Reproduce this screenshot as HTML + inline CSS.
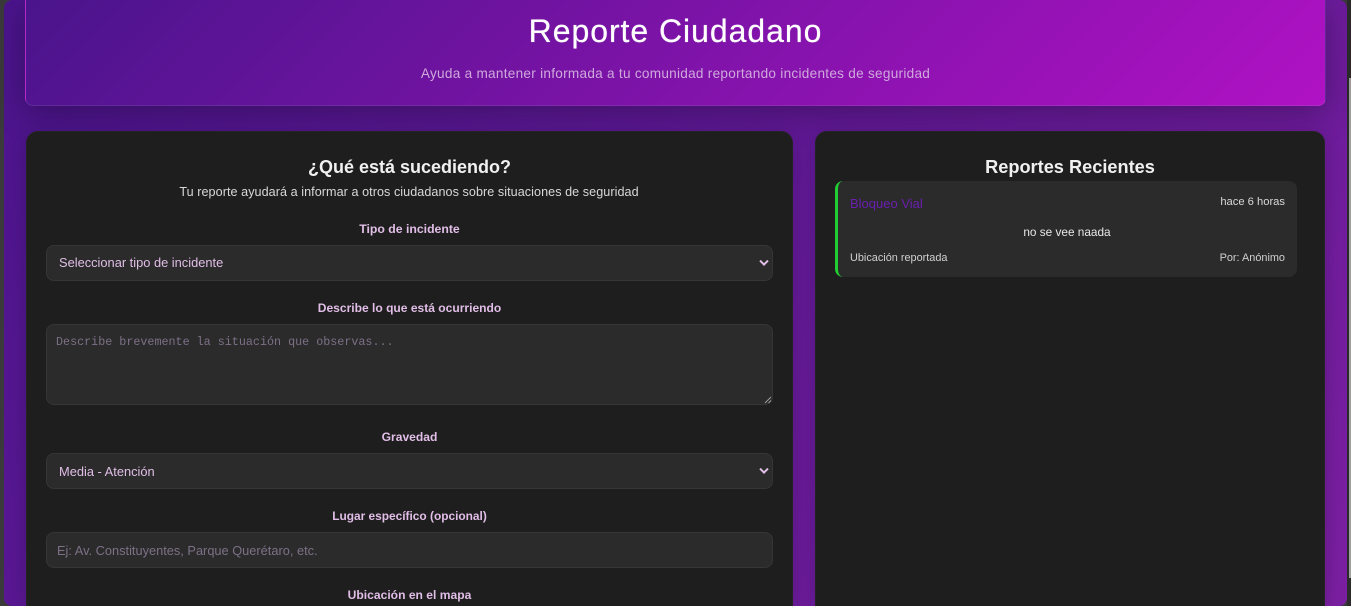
<!DOCTYPE html>
<html lang="es">
<head>
<meta charset="utf-8">
<title>Reporte Ciudadano</title>
<style>
*{box-sizing:border-box}
html,body{margin:0;padding:0;width:1351px;height:606px;overflow:hidden;background:#3a3a3a;font-family:"Liberation Sans",sans-serif}
#w{position:relative;width:1351px;height:606px;overflow:hidden;background:#3a3a3a}
.a{position:absolute}
.t{position:absolute;white-space:nowrap;line-height:1}
.c{transform:translateX(-50%)}
#bg{left:4px;top:0;width:1343px;height:606px;border-radius:8px;background:linear-gradient(135deg,#4a148c 0%,#7b1fa2 100%)}
#sb{left:1347px;top:0;width:4px;height:606px;background:#2b2b2b}
#th{left:1349px;top:78px;width:2px;height:500px;background:#9f9f9f}
#hd{left:25px;top:0;width:1301px;height:106px;border-radius:0 0 8px 8px;background:linear-gradient(135deg,#4a148c 0%,#b012c4 100%);border:1px solid rgba(255,255,255,.1);border-top:0;box-shadow:0 8px 32px rgba(0,0,0,.3)}
.card{background:#1e1e1e;border:1px solid #232323;border-bottom:0;border-radius:12px 12px 0 0;box-shadow:0 4px 20px rgba(0,0,0,.2)}
#l{left:26px;top:131px;width:767px;height:475px}
#r{left:815px;top:131px;width:510px;height:475px}
.f{background:#2b2b2b;border:1px solid #363636;border-radius:8px;left:46px;width:727px}
.lb{font-weight:bold;color:#e1bee7;left:409.5px}
.v{font-size:12.85px;color:#e1bee7;left:59px}
.ph{color:#7d7087}
svg{position:absolute;display:block}
</style>
</head>
<body>
<div id="w">
<div class="a" id="bg"></div>
<div class="a" id="sb"></div>
<div class="a" id="th"></div>

<div class="a" id="hd"></div>
<div class="t c" style="left:675.5px;top:15px;font-size:32px;color:#fff;letter-spacing:.95px;text-shadow:0 0 .6px #fff">Reporte Ciudadano</div>
<div class="t c" style="left:675.5px;top:67px;font-size:13.6px;color:#cfa8dc;letter-spacing:.27px">Ayuda a mantener informada a tu comunidad reportando incidentes de seguridad</div>

<div class="a card" id="l"></div>
<div class="a card" id="r"></div>

<div class="t c" style="left:409.5px;top:158px;font-size:18px;font-weight:bold;color:#f0f0f0">¿Qué está sucediendo?</div>
<div class="t c" style="left:409px;top:186px;font-size:12.6px;color:#d8d8d8;letter-spacing:.06px">Tu reporte ayudará a informar a otros ciudadanos sobre situaciones de seguridad</div>

<div class="t c lb" style="top:223px;font-size:12.25px">Tipo de incidente</div>
<div class="a f" style="top:245px;height:36px"></div>
<div class="t v" style="top:257px">Seleccionar tipo de incidente</div>
<svg style="left:759px;top:259px" width="11" height="8" viewBox="0 0 11 8"><path d="M1 1.6 L5 5.6 L9 1.6" fill="none" stroke="#e1bee7" stroke-width="2"/></svg>

<div class="t c lb" style="top:302px;font-size:12.05px">Describe lo que está ocurriendo</div>
<div class="a f" style="top:324px;height:81px"></div>
<div class="t ph" style="left:56px;top:337px;font-family:'Liberation Mono',monospace;font-size:11.73px">Describe brevemente la situación que observas...</div>
<svg style="left:764px;top:396px" width="8" height="8" viewBox="0 0 8 8"><path d="M1 7 L7 1 M4.5 7 L7 4.5" stroke="#9a9a9a" stroke-width="1"/></svg>

<div class="t c lb" style="top:431px;font-size:12.1px">Gravedad</div>
<div class="a f" style="top:453px;height:36px"></div>
<div class="t v" style="top:466px">Media - Atención</div>
<svg style="left:759px;top:467px" width="11" height="8" viewBox="0 0 11 8"><path d="M1 1.6 L5 5.6 L9 1.6" fill="none" stroke="#e1bee7" stroke-width="2"/></svg>

<div class="t c lb" style="top:511px;font-size:11.9px">Lugar específico (opcional)</div>
<div class="a f" style="top:532px;height:36px"></div>
<div class="t ph" style="left:57px;top:545px;font-size:12.8px">Ej: Av. Constituyentes, Parque Querétaro, etc.</div>

<div class="t c lb" style="top:589px;font-size:12.1px">Ubicación en el mapa</div>

<div class="t c" style="left:1070px;top:158px;font-size:18.2px;font-weight:bold;color:#f0f0f0">Reportes Recientes</div>
<div class="a" style="left:835px;top:181px;width:462px;height:96px;background:#2b2b2b;border-left:3px solid #22cc33;border-radius:8px"></div>
<div class="t" style="left:850px;top:197px;font-size:13px;color:#6a1fb0">Bloqueo Vial</div>
<div class="t" style="right:66px;top:197px;font-size:11.2px;color:#d8d8d8">hace 6 horas</div>
<div class="t c" style="left:1067px;top:227px;font-size:11.8px;color:#e8e8e8">no se vee naada</div>
<div class="t" style="left:850px;top:253px;font-size:10.9px;color:#d0d0d0">Ubicación reportada</div>
<div class="t" style="right:66px;top:253px;font-size:10.9px;color:#d0d0d0">Por: Anónimo</div>
</div>
</body>
</html>
